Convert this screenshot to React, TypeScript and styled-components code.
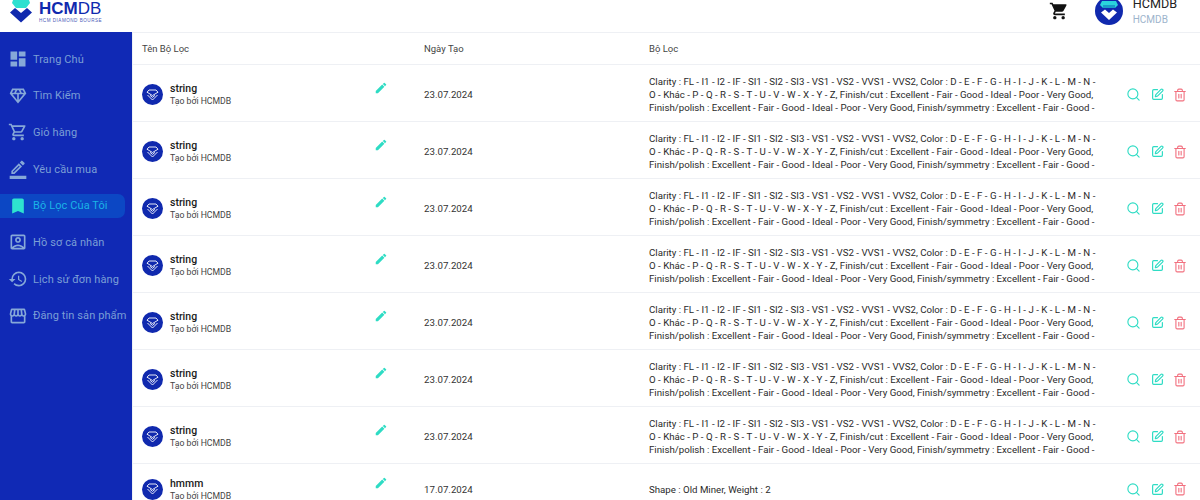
import * as React from 'react'
import styled, { createGlobalStyle } from 'styled-components'
import { MdDashboard, MdOutlineDiamond, MdOutlineShoppingCart, MdOutlineBorderColor, MdBookmark, MdOutlineAccountBox, MdHistory, MdOutlineStorefront, MdShoppingCart, MdEdit } from 'react-icons/md'
import { Search, SquarePen, Trash2 } from 'lucide-react'

const LONG_TEXT = 'Clarity : FL - I1 - I2 - IF - SI1 - SI2 - SI3 - VS1 - VS2 - VVS1 - VVS2, Color : D - E - F - G - H - I - J - K - L - M - N - O - Khác - P - Q - R - S - T - U - V - W - X - Y - Z, Finish/cut : Excellent - Fair - Good - Ideal - Poor - Very Good, Finish/polish : Excellent - Fair - Good - Ideal - Poor - Very Good, Finish/symmetry : Excellent - Fair - Good -'

const NAV = [
  { label: 'Trang Chủ', icon: MdDashboard },
  { label: 'Tìm Kiếm', icon: MdOutlineDiamond },
  { label: 'Giỏ hàng', icon: MdOutlineShoppingCart },
  { label: 'Yêu cầu mua', icon: MdOutlineBorderColor },
  { label: 'Bộ Lọc Của Tôi', icon: MdBookmark, active: true },
  { label: 'Hồ sơ cá nhân', icon: MdOutlineAccountBox },
  { label: 'Lịch sử đơn hàng', icon: MdHistory },
  { label: 'Đăng tin sản phẩm', icon: MdOutlineStorefront },
]

const ROWS = [
  { name: 'string', date: '23.07.2024', filter: LONG_TEXT },
  { name: 'string', date: '23.07.2024', filter: LONG_TEXT },
  { name: 'string', date: '23.07.2024', filter: LONG_TEXT },
  { name: 'string', date: '23.07.2024', filter: LONG_TEXT },
  { name: 'string', date: '23.07.2024', filter: LONG_TEXT },
  { name: 'string', date: '23.07.2024', filter: LONG_TEXT },
  { name: 'string', date: '23.07.2024', filter: LONG_TEXT },
  { name: 'hmmm', date: '17.07.2024', filter: 'Shape : Old Miner, Weight : 2' },
]

const Global = createGlobalStyle`
  html, body { margin: 0; padding: 0; height: 100%; overflow: hidden; background: #fff; }
  body { font-family: Roboto, "Liberation Sans", sans-serif; }
`

const Page = styled.div`
  width: 1200px; height: 500px; overflow: hidden;
  display: flex; flex-direction: column;
`
const TopBar = styled.header`
  height: 32px; flex: none; display: flex; justify-content: space-between;
  background: #fff; padding: 0 23px 0 10px; box-sizing: border-box;
`
const Brand = styled.div`
  display: flex; align-items: flex-start; gap: 7px; height: 32px;
`
const BrandText = styled.div`
  display: flex; flex-direction: column; gap: 2px; padding-top: 1px;
`
const BrandName = styled.div`
  font-family: "Liberation Sans", sans-serif; font-size: 17px; line-height: 15px; color: #1029ae; font-weight: 700;
  span { font-weight: 400; }
`
const BrandSub = styled.div`
  font-family: "Liberation Sans", sans-serif; font-size: 4.6px; line-height: 6px; letter-spacing: 0.5px; color: #4a5cb8; white-space: nowrap;
`
const TopRight = styled.div`
  display: flex; align-items: flex-start; height: 32px;
`
const CartButton = styled.div`
  margin: 1px 26px 0 0; color: #111; display: flex;
`
const UserBlock = styled.div`
  display: flex; gap: 10px; margin-top: -3px; align-items: flex-start;
`
const UserText = styled.div`
  display: flex; flex-direction: column; gap: 1.5px;
`
const UserName = styled.div`
  font-size: 12.6px; line-height: 14px; color: #222;
`
const UserRole = styled.div`
  font-size: 10px; line-height: 13px; color: #9db4cc;
`
const Body = styled.div`
  flex: 1; display: flex; min-height: 0;
`
const Sidebar = styled.nav`
  width: 132px; flex: none; background: #1029b5; padding-top: 15px; box-sizing: border-box;
  display: flex; flex-direction: column; gap: 12.7px;
`
const NavItem = styled.div<{ $active?: boolean }>`
  height: 24px; display: flex; align-items: center; gap: 5px; padding-left: 8px; margin-right: 7px;
  border-radius: 0 7px 7px 0; white-space: nowrap; font-size: 11px; letter-spacing: 0.1px;
  color: ${p => (p.$active ? '#1bb4e6' : '#7b9fd6')};
  background: ${p => (p.$active ? '#0c47c4' : 'transparent')};
  svg { flex: none; color: ${p => (p.$active ? '#2ee3cf' : '#86a8d8')}; }
`
const Main = styled.main`
  flex: 1; min-width: 0; border-left: 1px solid #eef1f6; border-top: 1px solid #eef0f4;
`
const Row = styled.div`
  display: grid; grid-template-columns: 282px 225px 477px 1fr; box-sizing: border-box;
  padding-left: 9px; border-bottom: 1px solid #eef0f4; align-items: center;
`
const HeaderRow = styled(Row)`
  height: 32px; font-size: 9.5px; color: #444;
`
const DataRow = styled(Row)`
  height: 57px; padding-top: 3px;
  &:last-child { height: 47px; border-bottom: none; }
`
const NameCell = styled.div`
  display: flex; align-items: center; position: relative;
`
const Avatar = styled.div`
  width: 21px; height: 21px; border-radius: 50%; background: #1029ae; flex: none;
  display: flex; align-items: center; justify-content: center; margin-right: 7px;
`
const NameText = styled.div`
  display: flex; flex-direction: column; gap: 1px;
`
const Name = styled.div`
  font-size: 10.5px; line-height: 13px; font-weight: 500; color: #1a1a1a;
`
const Sub = styled.div`
  font-size: 8.7px; line-height: 11px; color: #444;
`
const PencilButton = styled.div`
  position: absolute; left: 232px; top: -1px; color: #2edcc4; display: flex;
`
const DateCell = styled.div`
  font-size: 9.7px; color: #333;
`
const FilterCell = styled.div`
  width: 450px; font-size: 9.68px; line-height: 13px; color: #2a2a2a;
`
const Actions = styled.div`
  display: flex; gap: 9.5px; align-items: center;
`
const ActionIcon = styled.div<{ $color: string }>`
  color: ${p => p.$color}; display: flex;
`

const LogoMark = () => (
  <svg width="22" height="23" viewBox="0 0 22 23">
    <polygon points="3,0 19,0 20,3 16,8 6,8 2,3" fill="#2ee0d0" />
    <path d="M0 12.5 L5 8 L11 13 L17 8 L22 12.5 L11 22.5 Z" fill="#1029ae" />
  </svg>
)

const UserAvatar = () => (
  <svg width="28" height="28" viewBox="0 0 28 28">
    <circle cx="14" cy="14" r="14" fill="#1029ae" />
    <polygon points="7,4 21,4 23,8 20,11 8,11 5,8" fill="#2ad4dc" />
    <polygon points="8,8 20,8 20,11 8,11" fill="#1a9cc8" />
    <path d="M6 15.5 L10 12.5 L14 16 L18 12.5 L22 15.5 L14 23 Z" fill="#fff" />
  </svg>
)

const RowMark = () => (
  <svg width="13" height="12" viewBox="0 0 13 12" fill="none" stroke="#fff" strokeWidth="0.9">
    <path d="M3 1 H10 L12 3.2 L6.5 6.5 L1 3.2 Z" />
    <path d="M1.5 6 L6.5 11 L11.5 6 M4 6.3 L6.5 8.4 L9 6.3" />
  </svg>
)

const App: React.FC = () => (
  <Page>
    <Global />
    <TopBar>
      <Brand>
        <LogoMark />
        <BrandText>
          <BrandName>HCM<span>DB</span></BrandName>
          <BrandSub>HCM DIAMOND BOURSE</BrandSub>
        </BrandText>
      </Brand>
      <TopRight>
        <CartButton><MdShoppingCart size={20} /></CartButton>
        <UserBlock>
          <UserAvatar />
          <UserText>
            <UserName>HCMDB</UserName>
            <UserRole>HCMDB</UserRole>
          </UserText>
        </UserBlock>
      </TopRight>
    </TopBar>
    <Body>
      <Sidebar>
        {NAV.map(item => (
          <NavItem key={item.label} $active={item.active}>
            <item.icon size={20} />
            {item.label}
          </NavItem>
        ))}
      </Sidebar>
      <Main>
        <HeaderRow>
          <div>Tên Bộ Lọc</div>
          <div>Ngày Tạo</div>
          <div>Bộ Lọc</div>
        </HeaderRow>
        {ROWS.map((row, i) => (
          <DataRow key={i}>
            <NameCell>
              <Avatar><RowMark /></Avatar>
              <NameText>
                <Name>{row.name}</Name>
                <Sub>Tạo bởi HCMDB</Sub>
              </NameText>
              <PencilButton><MdEdit size={14} /></PencilButton>
            </NameCell>
            <DateCell>{row.date}</DateCell>
            <FilterCell>{row.filter}</FilterCell>
            <Actions>
              <ActionIcon $color="#2edcc4"><Search size={15} strokeWidth={1.8} /></ActionIcon>
              <ActionIcon $color="#2edcc4"><SquarePen size={13} strokeWidth={2.2} /></ActionIcon>
              <ActionIcon $color="#f2707f"><Trash2 size={14} strokeWidth={1.9} /></ActionIcon>
            </Actions>
          </DataRow>
        ))}
      </Main>
    </Body>
  </Page>
)

export default App
